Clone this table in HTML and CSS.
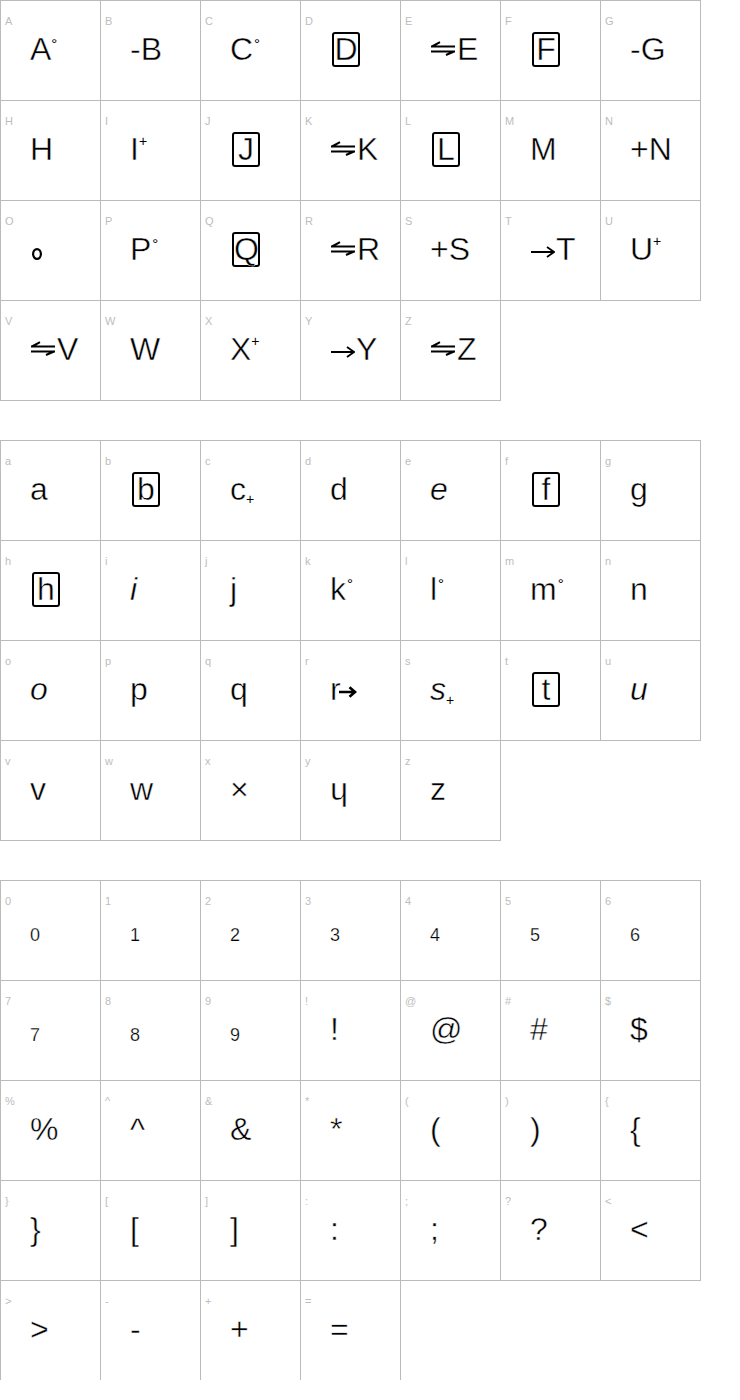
FILE: index.html
```html
<!DOCTYPE html>
<html>
<head>
<meta charset="utf-8">
<title>Character map</title>
<link rel="stylesheet" href="styles.css">
</head>
<body>
<section class="grid">
  <div class="cell"><div class="lbl">A</div><div class="g">A<span class="deg ov">°</span></div></div>
  <div class="cell"><div class="lbl">B</div><div class="g">-B</div></div>
  <div class="cell"><div class="lbl">C</div><div class="g">C<span class="deg">°</span></div></div>
  <div class="cell"><div class="lbl">D</div><div class="g"><span class="box">D</span></div></div>
  <div class="cell"><div class="lbl">E</div><div class="g"><svg class="harp" width="24" height="15" viewBox="0 0 24 15"><path d="M0 5.5H24M1 5.5L9 1.2M0 10.5H24M23 10.5L15 14"/></svg>E</div></div>
  <div class="cell"><div class="lbl">F</div><div class="g"><span class="box">F</span></div></div>
  <div class="cell"><div class="lbl">G</div><div class="g">-G</div></div>

  <div class="cell"><div class="lbl">H</div><div class="g">H</div></div>
  <div class="cell"><div class="lbl">I</div><div class="g">I<span class="sup">+</span></div></div>
  <div class="cell"><div class="lbl">J</div><div class="g"><span class="box">J</span></div></div>
  <div class="cell"><div class="lbl">K</div><div class="g"><svg class="harp" width="24" height="15" viewBox="0 0 24 15"><path d="M0 5.5H24M1 5.5L9 1.2M0 10.5H24M23 10.5L15 14"/></svg>K</div></div>
  <div class="cell"><div class="lbl">L</div><div class="g"><span class="box">L</span></div></div>
  <div class="cell"><div class="lbl">M</div><div class="g">M</div></div>
  <div class="cell"><div class="lbl">N</div><div class="g">+N</div></div>

  <div class="cell"><div class="lbl">O</div><div class="g"><svg class="ring" width="10" height="12" viewBox="0 0 10 12"><ellipse cx="5" cy="6" rx="3.9" ry="4.9"/></svg></div></div>
  <div class="cell"><div class="lbl">P</div><div class="g">P<span class="deg">°</span></div></div>
  <div class="cell"><div class="lbl">Q</div><div class="g"><span class="box">Q</span></div></div>
  <div class="cell"><div class="lbl">R</div><div class="g"><svg class="harp" width="24" height="15" viewBox="0 0 24 15"><path d="M0 5.5H24M1 5.5L9 1.2M0 10.5H24M23 10.5L15 14"/></svg>R</div></div>
  <div class="cell"><div class="lbl">S</div><div class="g">+S</div></div>
  <div class="cell"><div class="lbl">T</div><div class="g"><svg class="arr" width="24" height="14" viewBox="0 0 24 14"><path d="M0 7H23M16 2L23 7L16 12"/></svg>T</div></div>
  <div class="cell"><div class="lbl">U</div><div class="g">U<span class="sup">+</span></div></div>

  <div class="cell"><div class="lbl">V</div><div class="g"><svg class="harp" width="24" height="15" viewBox="0 0 24 15"><path d="M0 5.5H24M1 5.5L9 1.2M0 10.5H24M23 10.5L15 14"/></svg>V</div></div>
  <div class="cell"><div class="lbl">W</div><div class="g">W</div></div>
  <div class="cell"><div class="lbl">X</div><div class="g">X<span class="sup">+</span></div></div>
  <div class="cell"><div class="lbl">Y</div><div class="g"><svg class="arr" width="24" height="14" viewBox="0 0 24 14"><path d="M0 7H23M16 2L23 7L16 12"/></svg>Y</div></div>
  <div class="cell"><div class="lbl">Z</div><div class="g"><svg class="harp" width="24" height="15" viewBox="0 0 24 15"><path d="M0 5.5H24M1 5.5L9 1.2M0 10.5H24M23 10.5L15 14"/></svg>Z</div></div>
</section>

<section class="grid">
  <div class="cell"><div class="lbl">a</div><div class="g">a</div></div>
  <div class="cell"><div class="lbl">b</div><div class="g"><span class="box">b</span></div></div>
  <div class="cell"><div class="lbl">c</div><div class="g">c<span class="sub">+</span></div></div>
  <div class="cell"><div class="lbl">d</div><div class="g">d</div></div>
  <div class="cell"><div class="lbl">e</div><div class="g"><i>e</i></div></div>
  <div class="cell"><div class="lbl">f</div><div class="g"><span class="box">f</span></div></div>
  <div class="cell"><div class="lbl">g</div><div class="g">g</div></div>

  <div class="cell"><div class="lbl">h</div><div class="g"><span class="box">h</span></div></div>
  <div class="cell"><div class="lbl">i</div><div class="g"><i>i</i></div></div>
  <div class="cell"><div class="lbl">j</div><div class="g">j</div></div>
  <div class="cell"><div class="lbl">k</div><div class="g">k<span class="deg">°</span></div></div>
  <div class="cell"><div class="lbl">l</div><div class="g">l<span class="deg">°</span></div></div>
  <div class="cell"><div class="lbl">m</div><div class="g">m<span class="deg">°</span></div></div>
  <div class="cell"><div class="lbl">n</div><div class="g">n</div></div>

  <div class="cell"><div class="lbl">o</div><div class="g"><i>o</i></div></div>
  <div class="cell"><div class="lbl">p</div><div class="g">p</div></div>
  <div class="cell"><div class="lbl">q</div><div class="g">q</div></div>
  <div class="cell"><div class="lbl">r</div><div class="g">r<svg class="barr" width="18" height="12" viewBox="0 0 18 12"><path d="M0 6H16M10.5 1.2L16 6L10.5 10.8"/></svg></div></div>
  <div class="cell"><div class="lbl">s</div><div class="g"><i>s</i><span class="sub low">+</span></div></div>
  <div class="cell"><div class="lbl">t</div><div class="g"><span class="box">t</span></div></div>
  <div class="cell"><div class="lbl">u</div><div class="g"><i>u</i></div></div>

  <div class="cell"><div class="lbl">v</div><div class="g">v</div></div>
  <div class="cell"><div class="lbl">w</div><div class="g">w</div></div>
  <div class="cell"><div class="lbl">x</div><div class="g">×</div></div>
  <div class="cell"><div class="lbl">y</div><div class="g">ɥ</div></div>
  <div class="cell"><div class="lbl">z</div><div class="g">z</div></div>
</section>

<section class="grid">
  <div class="cell"><div class="lbl">0</div><div class="g sm">0</div></div>
  <div class="cell"><div class="lbl">1</div><div class="g sm">1</div></div>
  <div class="cell"><div class="lbl">2</div><div class="g sm">2</div></div>
  <div class="cell"><div class="lbl">3</div><div class="g sm">3</div></div>
  <div class="cell"><div class="lbl">4</div><div class="g sm">4</div></div>
  <div class="cell"><div class="lbl">5</div><div class="g sm">5</div></div>
  <div class="cell"><div class="lbl">6</div><div class="g sm">6</div></div>

  <div class="cell"><div class="lbl">7</div><div class="g sm">7</div></div>
  <div class="cell"><div class="lbl">8</div><div class="g sm">8</div></div>
  <div class="cell"><div class="lbl">9</div><div class="g sm">9</div></div>
  <div class="cell"><div class="lbl">!</div><div class="g">!</div></div>
  <div class="cell"><div class="lbl">@</div><div class="g">@</div></div>
  <div class="cell"><div class="lbl">#</div><div class="g">#</div></div>
  <div class="cell"><div class="lbl">$</div><div class="g">$</div></div>

  <div class="cell"><div class="lbl">%</div><div class="g">%</div></div>
  <div class="cell"><div class="lbl">^</div><div class="g">^</div></div>
  <div class="cell"><div class="lbl">&amp;</div><div class="g">&amp;</div></div>
  <div class="cell"><div class="lbl">*</div><div class="g">*</div></div>
  <div class="cell"><div class="lbl">(</div><div class="g">(</div></div>
  <div class="cell"><div class="lbl">)</div><div class="g">)</div></div>
  <div class="cell"><div class="lbl">{</div><div class="g">{</div></div>

  <div class="cell"><div class="lbl">}</div><div class="g">}</div></div>
  <div class="cell"><div class="lbl">[</div><div class="g">[</div></div>
  <div class="cell"><div class="lbl">]</div><div class="g">]</div></div>
  <div class="cell"><div class="lbl">:</div><div class="g">:</div></div>
  <div class="cell"><div class="lbl">;</div><div class="g">;</div></div>
  <div class="cell"><div class="lbl">?</div><div class="g">?</div></div>
  <div class="cell"><div class="lbl">&lt;</div><div class="g">&lt;</div></div>

  <div class="cell"><div class="lbl">&gt;</div><div class="g">&gt;</div></div>
  <div class="cell"><div class="lbl">-</div><div class="g">-</div></div>
  <div class="cell"><div class="lbl">+</div><div class="g">+</div></div>
  <div class="cell"><div class="lbl">=</div><div class="g">=</div></div>
</section>
</body>
</html>
```

FILE: styles.css
```css
html, body {
  margin: 0;
  padding: 0;
  background: #fff;
}

body {
  font-family: "Liberation Sans", Arial, sans-serif;
  color: #000;
}

.grid {
  display: grid;
  grid-template-columns: repeat(7, 100px);
  grid-auto-rows: 100px;
  width: 701px;
}

.grid + .grid {
  margin-top: 40px;
}

.cell {
  width: 101px;
  height: 101px;
  box-sizing: border-box;
  border: 1px solid #bbb;
  padding: 13px 0 0 4px;
}

.lbl {
  font-size: 11px;
  line-height: 14px;
  height: 14px;
  color: #bdbdbd;
}

.g {
  margin: 3px 0 0 25px;
  font-size: 32px;
  line-height: 37px;
  height: 37px;
  white-space: nowrap;
  -webkit-text-stroke: 0.45px #fff;
}

.g.sm {
  font-size: 18px;
  padding-top: 6px;
  -webkit-text-stroke: 0.25px #fff;
}

.g i {
  font-style: italic;
}

.box {
  display: inline-block;
  width: 28px;
  height: 35px;
  box-sizing: border-box;
  margin-left: 2px;
  border: 2px solid #000;
  border-radius: 3px;
  line-height: 31px;
  text-align: center;
}

.deg {
  font-size: 15px;
  line-height: 0;
  vertical-align: 11px;
  margin-left: 1px;
  -webkit-text-stroke: 0;
}

.deg.ov {
  margin-left: 0;
}

.sup {
  font-size: 14px;
  line-height: 0;
  vertical-align: 14px;
  -webkit-text-stroke: 0;
}

.sub {
  font-size: 14px;
  line-height: 0;
  vertical-align: -4px;
  -webkit-text-stroke: 0;
}

.sub.low {
  vertical-align: -5px;
}

svg {
  fill: none;
  stroke: #000;
}

.harp {
  stroke-width: 2;
  vertical-align: 4px;
  margin: 0 2px 0 1px;
}

.arr {
  stroke-width: 1.8;
  vertical-align: 1px;
  margin: 0 1px 0 1px;
}

.barr {
  stroke-width: 2.6;
  vertical-align: 2px;
  margin-left: -2px;
}

.ring {
  stroke-width: 2.2;
  vertical-align: 0;
  margin-left: 2px;
}
```
